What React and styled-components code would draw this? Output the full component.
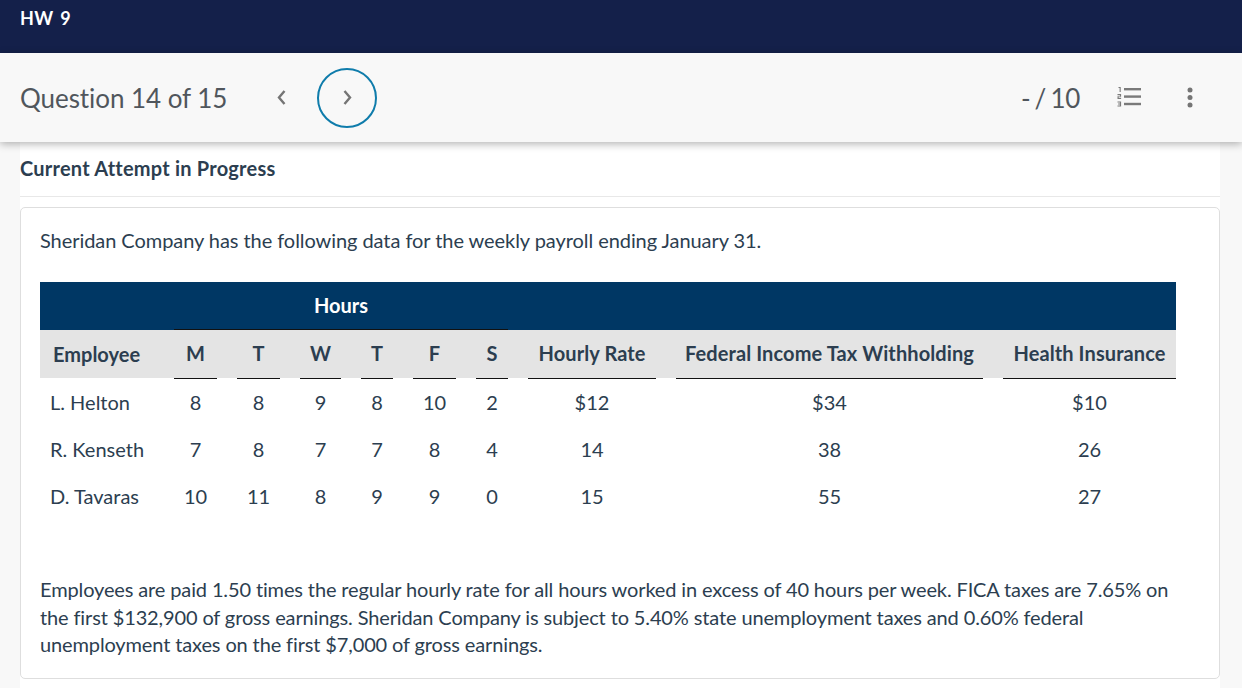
import styled, { createGlobalStyle } from "styled-components";

const GlobalStyle = createGlobalStyle`
  html, body {
    margin: 0;
    padding: 0;
    height: 688px;
    overflow: hidden;
    background: #f8f8f8;
    font-family: Lato, "Open Sans", sans-serif;
    color: #2c3e50;
  }
  * { box-sizing: border-box; }
`;

const columns = "114px 43px 43px 41px 32px 43px 32px 128px 307px 173px";

const rows = [
  ["L. Helton", "8", "8", "9", "8", "10", "2", "$12", "$34", "$10"],
  ["R. Kenseth", "7", "8", "7", "7", "8", "4", "14", "38", "26"],
  ["D. Tavaras", "10", "11", "8", "9", "9", "0", "15", "55", "27"],
];

const headers = ["M", "T", "W", "T", "F", "S", "Hourly Rate", "Federal Income Tax Withholding", "Health Insurance"];

const App = () => {
  return (
    <>
      <GlobalStyle />
      <TopBar>HW 9</TopBar>
      <Toolbar>
        <QuestionTitle>Question 14 of 15</QuestionTitle>
        <PrevButton aria-label="Previous">
          <Chevron d="M10.5 2 L5 8.5 L10.5 15" />
        </PrevButton>
        <NextButton aria-label="Next">
          <Chevron d="M5.5 2 L11 8.5 L5.5 15" />
        </NextButton>
        <Spacer />
        <Score>- / 10</Score>
        <ListIcon />
        <DotsIcon />
      </Toolbar>
      <Content>
        <AttemptHeading>Current Attempt in Progress</AttemptHeading>
        <Card>
          <Intro>Sheridan Company has the following data for the weekly payroll ending January 31.</Intro>
          <Table>
            <BandRow>
              <span />
              <HoursLabel>Hours</HoursLabel>
            </BandRow>
            <HeadRow>
              <EmployeeHead>Employee</EmployeeHead>
              {headers.map((h, i) => (
                <HeadCell key={i} $wide={i > 5}>{h}</HeadCell>
              ))}
            </HeadRow>
            {rows.map((row) => (
              <BodyRow key={row[0]}>
                {row.map((cell, i) => (
                  <BodyCell key={i} $left={i === 0}>{cell}</BodyCell>
                ))}
              </BodyRow>
            ))}
          </Table>
          <Outro>
            Employees are paid 1.50 times the regular hourly rate for all hours worked in excess of 40 hours per week.
            FICA taxes are 7.65% on the first $132,900 of gross earnings. Sheridan Company is subject to 5.40% state
            unemployment taxes and 0.60% federal unemployment taxes on the first $7,000 of gross earnings.
          </Outro>
        </Card>
      </Content>
    </>
  );
};

const Chevron = ({ d }) => (
  <svg width="16" height="17" viewBox="0 0 16 17" fill="none">
    <path d={d} stroke="#757575" strokeWidth="2.4" />
  </svg>
);

const ListIcon = () => (
  <ListSvg width="25" height="21" viewBox="0 0 25 21">
    <g fill="#7a7a7a">
      <rect x="7" y="1" width="17" height="2.4" />
      <rect x="7" y="8.4" width="17" height="2.4" />
      <rect x="7" y="15.8" width="17" height="2.4" />
      <path d="M1.5 0h2.2v5h-1.1v-4h-1.1z" />
      <path d="M0.5 7h3.6v2.8h-2.4v1h2.4v1.2h-3.6v-2.8h2.4v-1h-2.4z" />
      <path d="M0.5 14.5h3.6v5h-3.6v-1.1h2.4v-0.9h-1.8v-1h1.8v-0.9h-2.4z" />
    </g>
  </ListSvg>
);

const DotsIcon = () => (
  <DotsSvg width="10" height="22" viewBox="0 0 10 22">
    <g fill="#757575">
      <circle cx="5" cy="3" r="2.5" />
      <circle cx="5" cy="10.5" r="2.5" />
      <circle cx="5" cy="18" r="2.5" />
    </g>
  </DotsSvg>
);

const TopBar = styled.header`
  height: 53px;
  padding: 6px 20px 0;
  background: #14204a;
  color: #fff;
  font-size: 18px;
  font-weight: 700;
  line-height: 24px;
  letter-spacing: 0.4px;
  word-spacing: 2px;
`;

const Toolbar = styled.div`
  position: relative;
  z-index: 2;
  display: flex;
  align-items: center;
  height: 89px;
  padding: 0 20px;
  background: #f8f8f8;
  box-shadow: 0 2px 8px rgba(0, 0, 0, 0.3);
`;

const QuestionTitle = styled.h1`
  margin: 0;
  width: 207px;
  color: #50565c;
  font-size: 26px;
  font-weight: 400;
  line-height: 36px;
  white-space: nowrap;
  letter-spacing: -0.06px;
`;

const IconButton = styled.button`
  display: flex;
  align-items: center;
  justify-content: center;
  padding: 0;
  border: none;
  background: none;
`;

const PrevButton = styled(IconButton)`
  width: 60px;
  height: 60px;
  margin: 0 0 0 25px;
`;

const NextButton = styled(IconButton)`
  width: 60px;
  height: 60px;
  margin-left: 5px;
  border: 2px solid #0f7cab;
  border-radius: 50%;
`;

const Spacer = styled.div`
  flex: 1;
`;

const Score = styled.div`
  color: #50565c;
  font-size: 26px;
  line-height: 36px;
  word-spacing: -2px;
  letter-spacing: -0.3px;
`;

const ListSvg = styled.svg`
  margin-left: 37px;
`;

const DotsSvg = styled.svg`
  margin: 0 27px 0 43px;
`;

const Content = styled.main`
  width: 1200px;
  height: 546px;
  margin-left: 20px;
  background: #fff;
`;

const AttemptHeading = styled.h2`
  margin: 0;
  height: 55px;
  padding-top: 13px;
  border-bottom: 1px solid #e8e8e8;
  color: #2c3e50;
  font-size: 20px;
  font-weight: 700;
  line-height: 27px;
  letter-spacing: 0.22px;
`;

const Card = styled.section`
  margin-top: 10px;
  height: 472px;
  padding: 19px 19px 0;
  border: 1px solid #dedede;
  border-radius: 5px;
  background: #fff;
`;

const Intro = styled.p`
  margin: 0 0 28px;
  font-size: 20px;
  line-height: 27px;
  letter-spacing: -0.06px;
`;

const Table = styled.div`
  width: 1136px;
`;

const Row = styled.div`
  display: grid;
  grid-template-columns: ${columns};
  column-gap: 20px;
`;

const BandRow = styled(Row)`
  height: 48px;
  background: #003764;
`;

const HoursLabel = styled.div`
  grid-column: 2 / span 6;
  height: 48px;
  border-bottom: 1px solid #111;
  color: #fff;
  font-size: 20px;
  font-weight: 700;
  line-height: 46px;
  text-align: center;
`;

const HeadRow = styled(Row)`
  height: 48px;
  margin-bottom: 0.5px;
  background: #e4e4e4;
`;

const HeadCell = styled.div`
  height: 49px;
  border-bottom: 1px solid #111;
  font-size: 20px;
  font-weight: 700;
  line-height: 47px;
  text-align: center;
  letter-spacing: ${(p) => (p.$wide ? "0.1px" : "0")};
`;

const EmployeeHead = styled.div`
  padding-left: 13px;
  font-size: 20px;
  font-weight: 700;
  line-height: 49px;
`;

const BodyRow = styled(Row)`
  height: 47.25px;
`;

const BodyCell = styled.div`
  padding-left: ${(p) => (p.$left ? "10px" : "0")};
  font-size: 20px;
  line-height: 47px;
  text-align: ${(p) => (p.$left ? "left" : "center")};
`;

const Outro = styled.p`
  margin: 56px 0 0;
  font-size: 20px;
  line-height: 27.4px;
  letter-spacing: -0.13px;
`;

export default App;
